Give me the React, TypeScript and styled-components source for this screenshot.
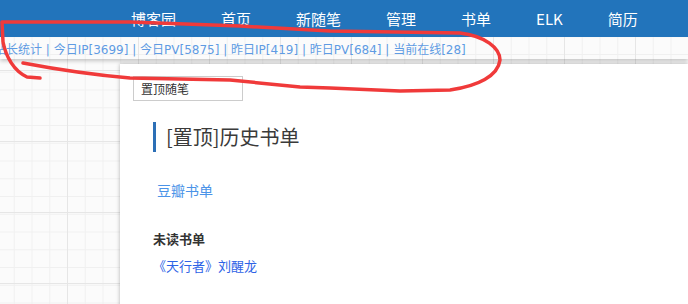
import React from "react";
import styled, { createGlobalStyle } from "styled-components";

const Global = createGlobalStyle`
  html, body { margin: 0; padding: 0; }
  body {
    width: 688px;
    height: 304px;
    overflow: hidden;
    font-family: "Noto Sans CJK SC", "Noto Sans", sans-serif;
    background-color: #fbfbfb;
    background-image:
      linear-gradient(to right, #e6e6e6 1px, transparent 1px),
      linear-gradient(to bottom, #e6e6e6 1px, transparent 1px),
      linear-gradient(to right, #f0f0f0 1px, transparent 1px),
      linear-gradient(to bottom, #f0f0f0 1px, transparent 1px);
    background-size: 71px 71px, 71px 71px, 17.75px 17.75px, 17.75px 17.75px;
    background-position: 67px -1px, 67px -1px, 13.75px 18.5px, 13.75px 18.5px;
  }
`;

const Page = styled.div`
  position: relative;
  width: 688px;
  height: 304px;
  overflow: hidden;
`;

const Top = styled.header`
  box-shadow: 0 2px 4px rgba(0, 0, 0, 0.22);
`;

const NavBar = styled.nav`
  height: 37px;
  background: #2274bb;
  display: flex;
  align-items: center;
  gap: 45px;
  padding-left: 131px;
`;

const NavItem = styled.a`
  color: #ffffff;
  font-size: 15px;
  line-height: 20px;
  text-decoration: none;
  white-space: nowrap;
`;

const Stats = styled.div`
  height: 21px;
  display: flex;
  align-items: center;
  font-family: "DejaVu Sans", "Noto Sans CJK SC", sans-serif;
  font-size: 12px;
  color: #5f9be3;
  white-space: nowrap;
  padding-top: 1px;
`;

const StatsText = styled.span`
  margin-left: -6px;
`;

const Card = styled.main`
  margin-top: 5px;
  margin-left: 120px;
  height: 260px;
  background: #ffffff;
  box-shadow: 0 0 4px rgba(0, 0, 0, 0.3);
  padding: 12px 0 0 13px;
  box-sizing: border-box;
  color: #333;
  overflow: hidden;
`;

const PinBox = styled.div`
  width: 110px;
  height: 25px;
  box-sizing: border-box;
  border: 1px solid #cccccc;
  display: flex;
  align-items: center;
  padding-left: 7px;
  font-size: 12px;
  color: #333;
`;

const Title = styled.h2`
  margin: 21px 0 0 20px;
  height: 30px;
  line-height: 30px;
  border-left: 3px solid #2c6fb6;
  padding-left: 10px;
  font-size: 20px;
  font-weight: 400;
  color: #3a3a3a;
`;

const Line = styled.p<{ $top: number; $left: number; $size?: number; $color?: string; $bold?: boolean }>`
  margin: ${(p) => p.$top}px 0 0 ${(p) => p.$left}px;
  font-size: ${(p) => p.$size ?? 13}px;
  line-height: 20px;
  color: ${(p) => p.$color ?? "#333"};
  font-weight: ${(p) => (p.$bold ? 700 : 400)};
  white-space: nowrap;
`;

const Annotation = styled.svg`
  position: absolute;
  left: 0;
  top: 0;
  pointer-events: none;
`;

export default function App() {
  const nav = ["博客园", "首页", "新随笔", "管理", "书单", "ELK", "简历"];
  return (
    <Page>
      <Global />
      <Top>
        <NavBar>
          {nav.map((n) => (
            <NavItem key={n}>{n}</NavItem>
          ))}
        </NavBar>
        <Stats>
          <StatsText>
            站长统计 | 今日IP[3699] | 今日PV[5875] | 昨日IP[419] | 昨日PV[684] | 当前在线[28]
          </StatsText>
        </Stats>
      </Top>
      <Card>
        <PinBox>置顶随笔</PinBox>
        <Title>[置顶]历史书单</Title>
        <Line $top={28} $left={24} $size={14} $color="#4a93e8">豆瓣书单</Line>
        <Line $top={29} $left={20} $bold>未读书单</Line>
        <Line $top={7} $left={20} $color="#2e63e6">《天行者》刘醒龙</Line>
        <Line $top={24} $left={20} $color="#2e63e6">《北去来辞》林白</Line>
      </Card>
      <Annotation width="688" height="304" viewBox="0 0 688 304">
        <path
          d="M40,78 L27,77 C14,71 6,57 3,42 L2,22 L130,22 L240,26 L330,31 L460,33 C485,36 500,48 500,60 C498,76 478,86 450,90 L400,91 L330,88 L300,87 L230,80 L130,78 C95,75 60,70 23,63"
          fill="none"
          stroke="#f03a3a"
          strokeWidth="3.5"
          strokeLinecap="round"
          strokeLinejoin="round"
        />
      </Annotation>
    </Page>
  );
}
